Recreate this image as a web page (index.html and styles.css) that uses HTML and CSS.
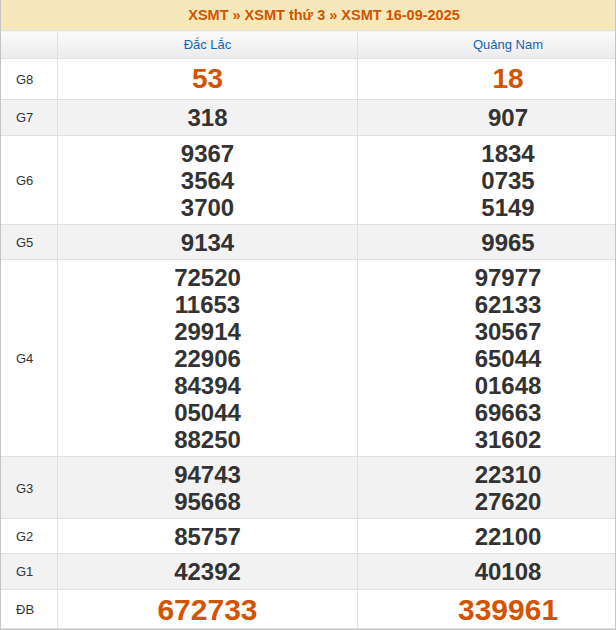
FILE: index.html
```html
<!DOCTYPE html>
<html lang="vi">
<head>
<meta charset="utf-8">
<title>XSMT 16-09-2025</title>
<link rel="stylesheet" href="styles.css">
</head>
<body>
<div class="frame">
<table class="kq">
  <colgroup><col class="c-lbl"><col class="c-one"><col class="c-two"></colgroup>
  <thead>
    <tr><th colspan="3" class="title">XSMT » XSMT thứ 3 » XSMT 16-09-2025</th></tr>
    <tr class="prov"><th class="lbl"></th><th>Đắc Lắc</th><th>Quảng Nam</th></tr>
  </thead>
  <tbody>
    <tr class="g8"><td class="lbl">G8</td><td class="big">53</td><td class="big">18</td></tr>
    <tr class="alt tall"><td class="lbl">G7</td><td>318</td><td>907</td></tr>
    <tr><td class="lbl">G6</td><td><div>9367</div><div>3564</div><div>3700</div></td><td><div>1834</div><div>0735</div><div>5149</div></td></tr>
    <tr class="alt"><td class="lbl">G5</td><td>9134</td><td>9965</td></tr>
    <tr><td class="lbl">G4</td>
      <td><div>72520</div><div>11653</div><div>29914</div><div>22906</div><div>84394</div><div>05044</div><div>88250</div></td>
      <td><div>97977</div><div>62133</div><div>30567</div><div>65044</div><div>01648</div><div>69663</div><div>31602</div></td></tr>
    <tr class="alt"><td class="lbl">G3</td><td><div>94743</div><div>95668</div></td><td><div>22310</div><div>27620</div></td></tr>
    <tr><td class="lbl">G2</td><td>85757</td><td>22100</td></tr>
    <tr class="alt tall"><td class="lbl">G1</td><td>42392</td><td>40108</td></tr>
    <tr class="db"><td class="lbl">ĐB</td><td class="huge">672733</td><td class="huge">339961</td></tr>
  </tbody>
</table>
</div>
</body>
</html>
```

FILE: styles.css
```css
html, body {
  margin: 0;
  padding: 0;
  background: #fff;
}
body {
  font-family: "Liberation Sans", Arial, sans-serif;
  width: 616px;
}
.frame {
  width: 614px;
  border: 1px solid #c4c4c4;
  border-top: none;
  overflow: hidden;
}
.kq {
  width: 658px;
  border-collapse: collapse;
  table-layout: fixed;
  margin-left: -1px;
}
.c-lbl { width: 57px; }
.c-one { width: 300px; }
.c-two { width: 301px; }
.kq th, .kq td {
  border: 1px solid #e0e0e0;
  padding: 0;
  text-align: center;
}
.kq .title {
  background: #f6e8bb;
  color: #d35400;
  font-weight: bold;
  font-size: 14.5px;
  height: 30px;
  padding-right: 11px;
  border: none;
  border-bottom: 1px solid #e0e0e0;
}
.prov th {
  height: 27px;
  font-size: 13px;
  font-weight: normal;
  color: #1462b0;
  background: linear-gradient(#fbfbfb, #ebebeb);
}
.kq td {
  font-size: 24px;
  font-weight: bold;
  color: #333;
  line-height: 27px;
  padding: 4px 0 3px;
}
.kq .tall td {
  padding-bottom: 4px;
}
.kq td.lbl {
  font-size: 13px;
  font-weight: normal;
  text-align: left;
  padding-left: 15px;
  color: #333;
}
.alt td {
  background: #f2f2f2;
}
.kq td.big {
  font-size: 28px;
  line-height: 32px;
  padding-bottom: 4px;
  color: #d35400;
}
.kq td.huge {
  font-size: 30px;
  line-height: 31px;
  color: #d35400;
}
```
